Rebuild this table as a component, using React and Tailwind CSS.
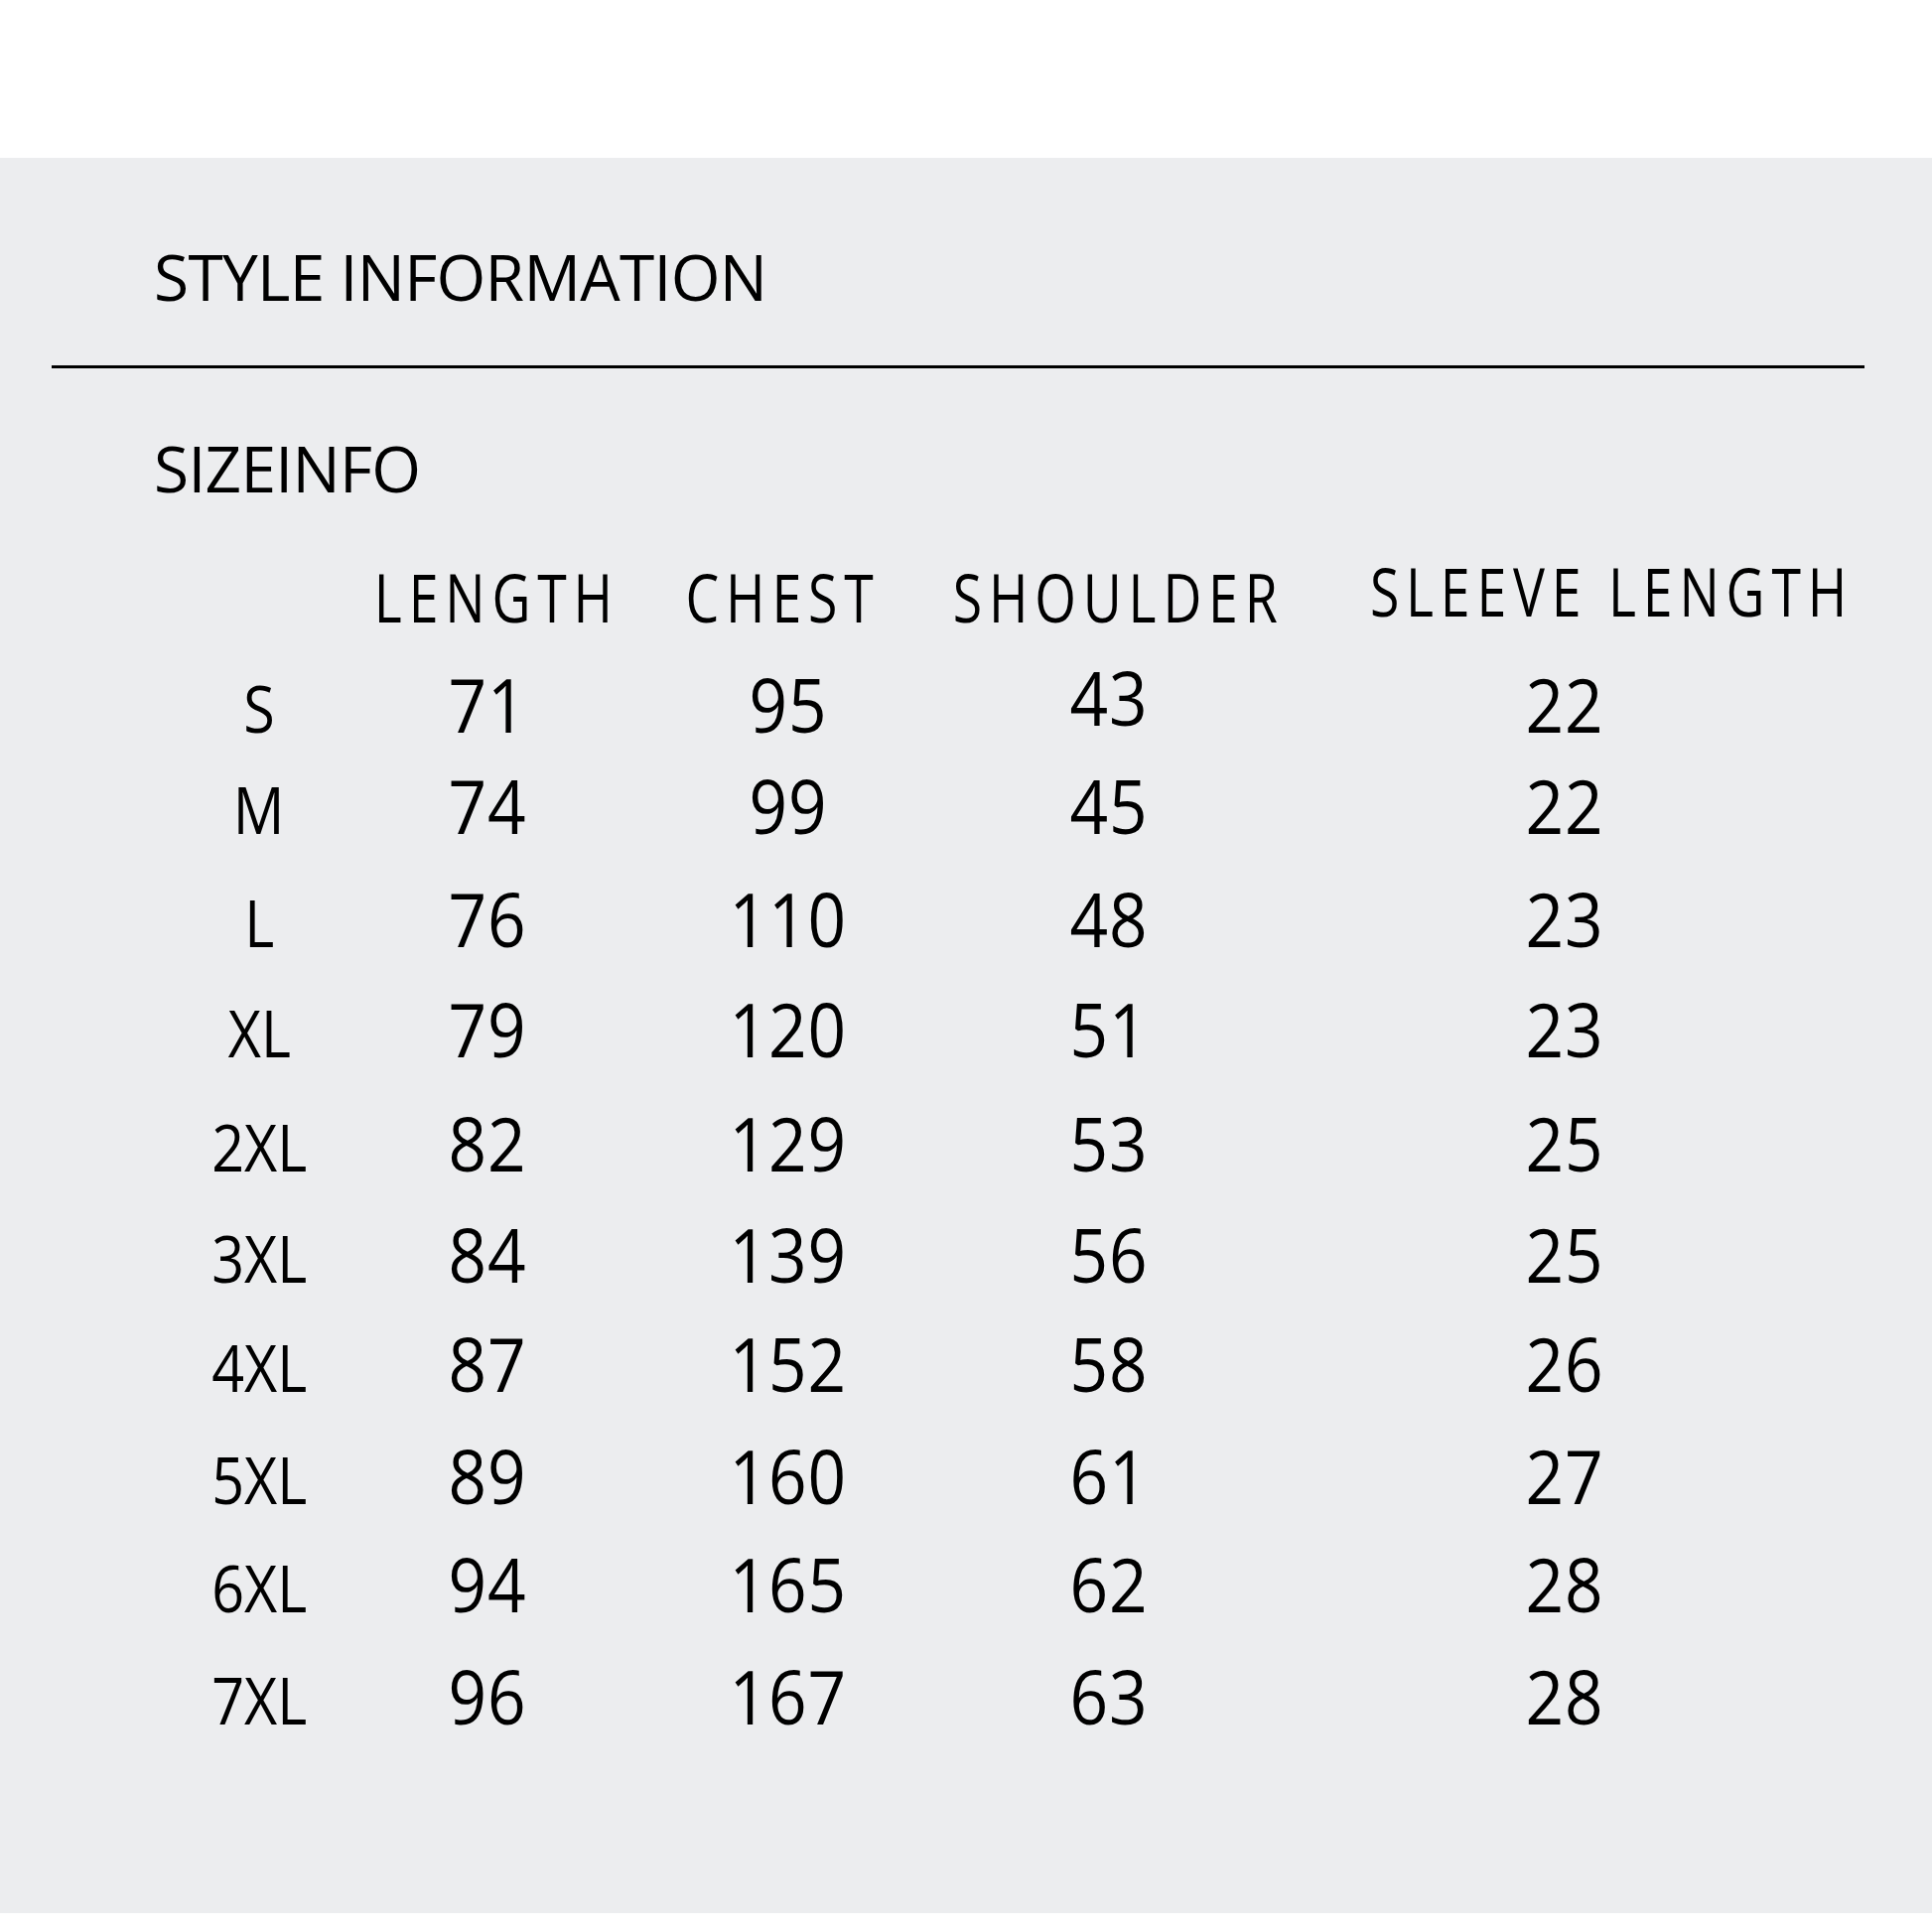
import React from "react";

const rows = [
  { c: ["S", "71", "95", "43", "22"], y: "" },
  { c: ["M", "74", "99", "45", "22"], y: "-translate-y-[9px]" },
  { c: ["L", "76", "110", "48", "23"], y: "-translate-y-[5px]" },
  { c: ["XL", "79", "120", "51", "23"], y: "-translate-y-[5px]" },
  { c: ["2XL", "82", "129", "53", "25"], y: "-translate-y-[1px]" },
  { c: ["3XL", "84", "139", "56", "25"], y: "" },
  { c: ["4XL", "87", "152", "58", "26"], y: "-translate-y-[1px]" },
  { c: ["5XL", "89", "160", "61", "27"], y: "translate-y-[2px]" },
  { c: ["6XL", "94", "165", "62", "28"], y: "" },
  { c: ["7XL", "96", "167", "63", "28"], y: "translate-y-[2px]" },
];

const headers = ["LENGTH", "CHEST", "SHOULDER", "SLEEVE LENGTH"];

export default function App() {
  return (
    <div className="w-[1946px] h-[1946px] bg-white font-['Open_Sans',sans-serif] text-black">
      <div className="h-[159px]" />
      <div className="h-[1768px] bg-[#ecedef] pt-[88px]">
        <h1 className="ml-[155px] text-[64px] leading-none tracking-[-0.7px] font-normal">
          STYLE INFORMATION
        </h1>
        <div className="ml-[52px] mt-[57px] h-[3px] w-[1826px] bg-black" />
        <h2 className="ml-[155px] mt-[69px] text-[64px] leading-none tracking-[-0.7px] font-normal">
          SIZEINFO
        </h2>
        <div className="mt-[42px]">
          <div className="grid grid-cols-[278px_298px_380px_612px] pl-[361px] h-[110.8px] leading-[110.8px] text-[67px]">
            {headers.map((h, i) => (
              <div key={h} className="flex justify-center">
                <span
                  className={
                    i === 3
                      ? "inline-block whitespace-nowrap scale-x-[0.8] tracking-[8.5px] -translate-y-[6px]"
                      : "inline-block whitespace-nowrap scale-x-[0.8] tracking-[8.5px]"
                  }
                >
                  {h}
                </span>
              </div>
            ))}
          </div>
          <div className="-mt-[3px]">
            {rows.map((r) => (
              <div
                key={r.c[0]}
                className={
                  "grid grid-cols-[200px_260px_346px_300px_618px] pl-[161px] h-[110.8px] leading-[110.8px] " +
                  r.y
                }
              >
                <div className="flex justify-center text-[66px]">
                  <span className="inline-block whitespace-nowrap scale-x-[0.87] translate-y-[3px]">
                    {r.c[0]}
                  </span>
                </div>
                {r.c.slice(1).map((v, j) => (
                  <div key={j} className="flex justify-center text-[75px]">
                    <span
                      className={
                        r.c[0] === "S" && j === 2
                          ? "inline-block whitespace-nowrap scale-x-[0.9] tracking-[1px] -translate-y-[7px]"
                          : "inline-block whitespace-nowrap scale-x-[0.9] tracking-[1px]"
                      }
                    >
                      {v}
                    </span>
                  </div>
                ))}
              </div>
            ))}
          </div>
        </div>
      </div>
    </div>
  );
}
